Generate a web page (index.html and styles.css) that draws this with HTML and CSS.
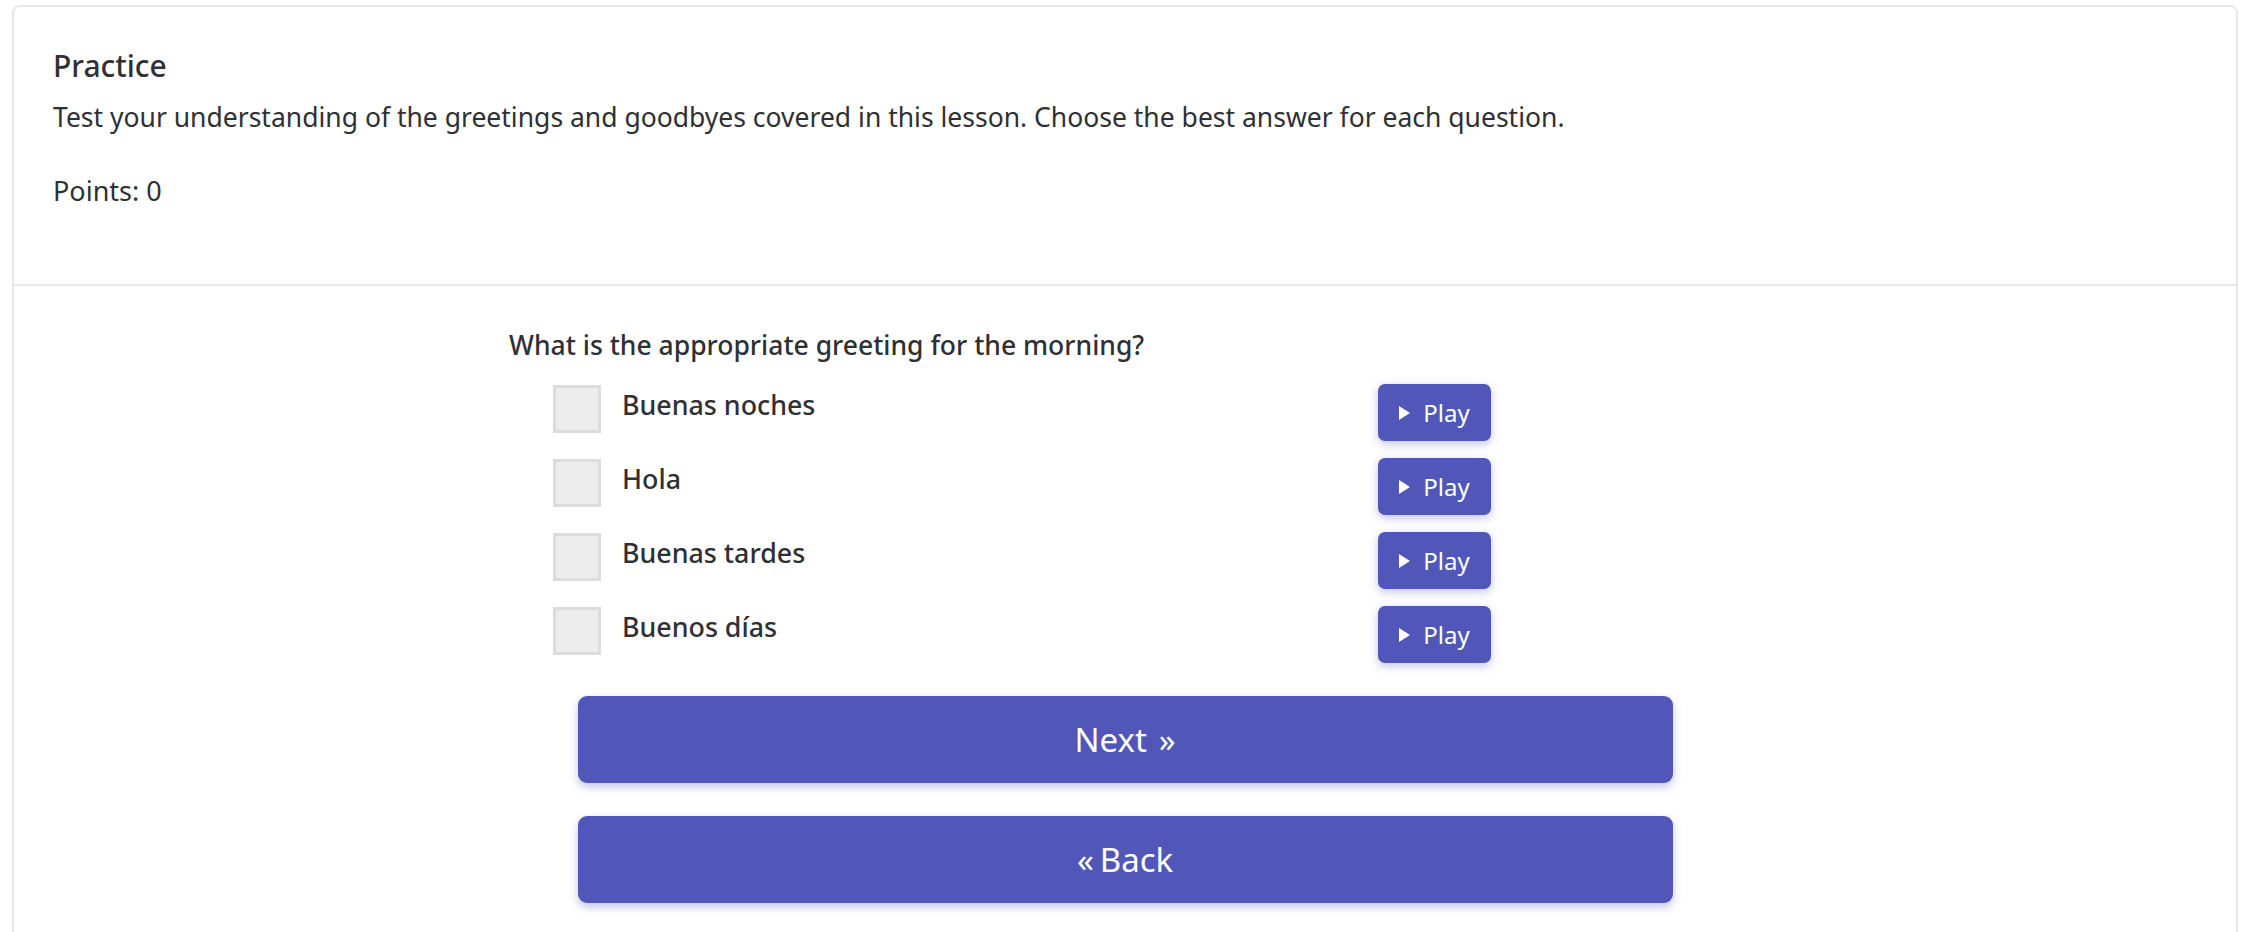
FILE: index.html
```html
<!DOCTYPE html>
<html>
<head>
<meta name="viewport" content="width=device-width, user-scalable=no">
<link rel="stylesheet" href="styles.css">
<title>Practice</title>
</head>
<body>
<div class="card">
	<div class="card-head">
		<h2>Practice</h2>
		<p class="intro">Test your understanding of the greetings and goodbyes covered in this lesson. Choose the best answer for each question.</p>
		<p class="points">Points: <span id="points">0</span></p>
	</div>
	<div class="quiz">
		<div class="question">What is the appropriate greeting for the morning?</div>
		<div class="options">
			<div class="option">
				<label class="choice"><span class="box"></span><span class="answer">Buenas noches</span></label>
				<a class="play"><span class="tri"></span>Play</a>
			</div>
			<div class="option">
				<label class="choice"><span class="box"></span><span class="answer">Hola</span></label>
				<a class="play"><span class="tri"></span>Play</a>
			</div>
			<div class="option">
				<label class="choice"><span class="box"></span><span class="answer">Buenas tardes</span></label>
				<a class="play"><span class="tri"></span>Play</a>
			</div>
			<div class="option">
				<label class="choice"><span class="box"></span><span class="answer">Buenos días</span></label>
				<a class="play"><span class="tri"></span>Play</a>
			</div>
		</div>
		<a class="big-btn">Next <span class="quote">&raquo;</span></a>
		<a class="big-btn back"><span class="quote">&laquo;</span>Back</a>
	</div>
</div>
</body>
</html>
```

FILE: styles.css
```css
* {
	box-sizing: border-box;
}
html {
	font-family: "Noto Sans", "Open Sans", sans-serif;
	color: #2f3033;
}
body {
	margin: 5px 10px 0 12px;
	background: #ffffff;
}
.card {
	border: 2px solid #e6e6eb;
	border-radius: 8px;
	min-height: 940px;
}
.card-head {
	padding: 41px 39px 76px;
	border-bottom: 2px solid #e6e6eb;
}
.card-head h2 {
	margin: 0;
	font-size: 30px;
	font-weight: 500;
	line-height: 35px;
}
.intro {
	margin: 17px 0 0;
	font-size: 26.5px;
	line-height: 35px;
}
.points {
	margin: 38px 0 0;
	font-size: 27px;
	line-height: 35px;
}
.quiz {
	width: 1232px;
	margin: 0 auto;
	padding-top: 42px;
}
.question {
	font-size: 26.5px;
	font-weight: 500;
	line-height: 35px;
}
.options {
	margin-top: 21px;
	padding-left: 44px;
	display: flex;
	flex-direction: column;
	gap: 17px;
}
.option {
	display: flex;
	align-items: flex-start;
	height: 57px;
}
.choice {
	display: flex;
	align-items: flex-start;
	width: 825px;
	cursor: pointer;
}
.box {
	width: 48px;
	height: 48px;
	margin-top: 1px;
	background: #ececec;
	border: 3px solid #dcdcdc;
}
.answer {
	margin: 3px 0 0 21px;
	font-size: 26.8px;
	font-weight: 500;
	line-height: 35px;
}
.play {
	display: flex;
	align-items: center;
	justify-content: center;
	gap: 13px;
	width: 113px;
	height: 57px;
	background: #5157b8;
	color: #ffffff;
	border-radius: 7px;
	font-size: 24px;
	box-shadow: 0 3px 10px rgba(81,87,184,0.35);
	cursor: pointer;
}
.tri {
	width: 0;
	height: 0;
	border-left: 11px solid #ffffff;
	border-top: 7px solid transparent;
	border-bottom: 7px solid transparent;
}
.big-btn {
	display: flex;
	align-items: center;
	justify-content: center;
	width: 1095px;
	height: 87px;
	margin: 33px auto 0;
	background: #5157b8;
	color: #ffffff;
	border-radius: 9px;
	font-size: 33px;
	box-shadow: 0 4px 10px rgba(81,87,184,0.35);
	cursor: pointer;
}
.big-btn .quote {
	margin-left: 12px;
}
.big-btn.back .quote {
	margin: 0 6px 0 0;
}
```
